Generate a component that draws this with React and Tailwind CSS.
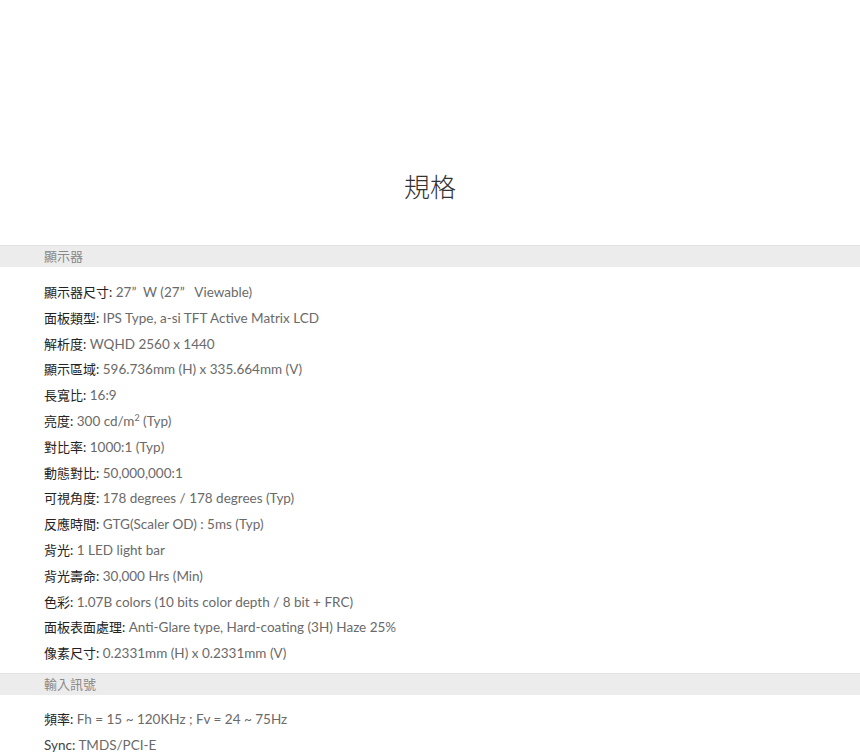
const SPECS = [
  {
    title: "顯示器",
    rows: [
      ["顯示器尺寸", "27”W (27” Viewable)"],
      ["面板類型", "IPS Type, a-si TFT Active Matrix LCD"],
      ["解析度", "WQHD 2560 x 1440"],
      ["顯示區域", "596.736mm (H) x 335.664mm (V)"],
      ["長寬比", "16:9"],
      ["亮度", "nits"],
      ["對比率", "1000:1 (Typ)"],
      ["動態對比", "50,000,000:1"],
      ["可視角度", "178 degrees / 178 degrees (Typ)"],
      ["反應時間", "GTG(Scaler OD) : 5ms (Typ)"],
      ["背光", "1 LED light bar"],
      ["背光壽命", "30,000 Hrs (Min)"],
      ["色彩", "1.07B colors (10 bits color depth / 8 bit + FRC)"],
      ["面板表面處理", "Anti-Glare type, Hard-coating (3H) Haze 25%"],
      ["像素尺寸", "0.2331mm (H) x 0.2331mm (V)"],
    ],
  },
  {
    title: "輸入訊號",
    rows: [
      ["頻率", "Fh = 15 ~ 120KHz ; Fv = 24 ~ 75Hz"],
      ["Sync", "TMDS/PCI-E"],
    ],
  },
];

const FONT =
  "font-['Lato','Noto_Sans_CJK_TC','Noto_Sans',sans-serif]";

function Value({ text }) {
  if (text === "nits") {
    return (
      <span>
        300 cd/m<sup className="text-[9px] -top-[0.6em]">2</sup> (Typ)
      </span>
    );
  }
  if (text.startsWith("27")) {
    return (
      <span>
        27”&nbsp;&nbsp;W (27”&nbsp;&nbsp;&nbsp;Viewable)
      </span>
    );
  }
  return <span>{text}</span>;
}

export default function App() {
  return (
    <div className={`min-h-screen bg-white pt-[167px] ${FONT}`}>
      <h1 className="text-center text-[26px] leading-[40px] text-[#333] font-light">
        規格
      </h1>

      <div className="mt-[38px]">
        {SPECS.map((section, i) => (
          <div key={section.title}>
            <div className="h-[22px] bg-[#ececec] border-t border-[#e2e2e2] pl-[44px] text-[13px] leading-[21px] text-[#888]">
              {section.title}
            </div>
            <ul className={i === 0 ? "pt-[13px] pb-[6px]" : "pt-[12px]"}>
              {section.rows.map(([label, value]) => (
                <li
                  key={label}
                  className="pl-[44px] text-[13.5px] leading-[25.8px] text-[#6a6a6a]"
                >
                  <span
                    className={
                      label === "Sync"
                        ? "text-[#444]"
                        : "text-[13px] font-normal text-[#222]"
                    }
                  >
                    {label}:
                  </span>{" "}
                  <Value text={value} />
                </li>
              ))}
            </ul>
          </div>
        ))}
      </div>
    </div>
  );
}
